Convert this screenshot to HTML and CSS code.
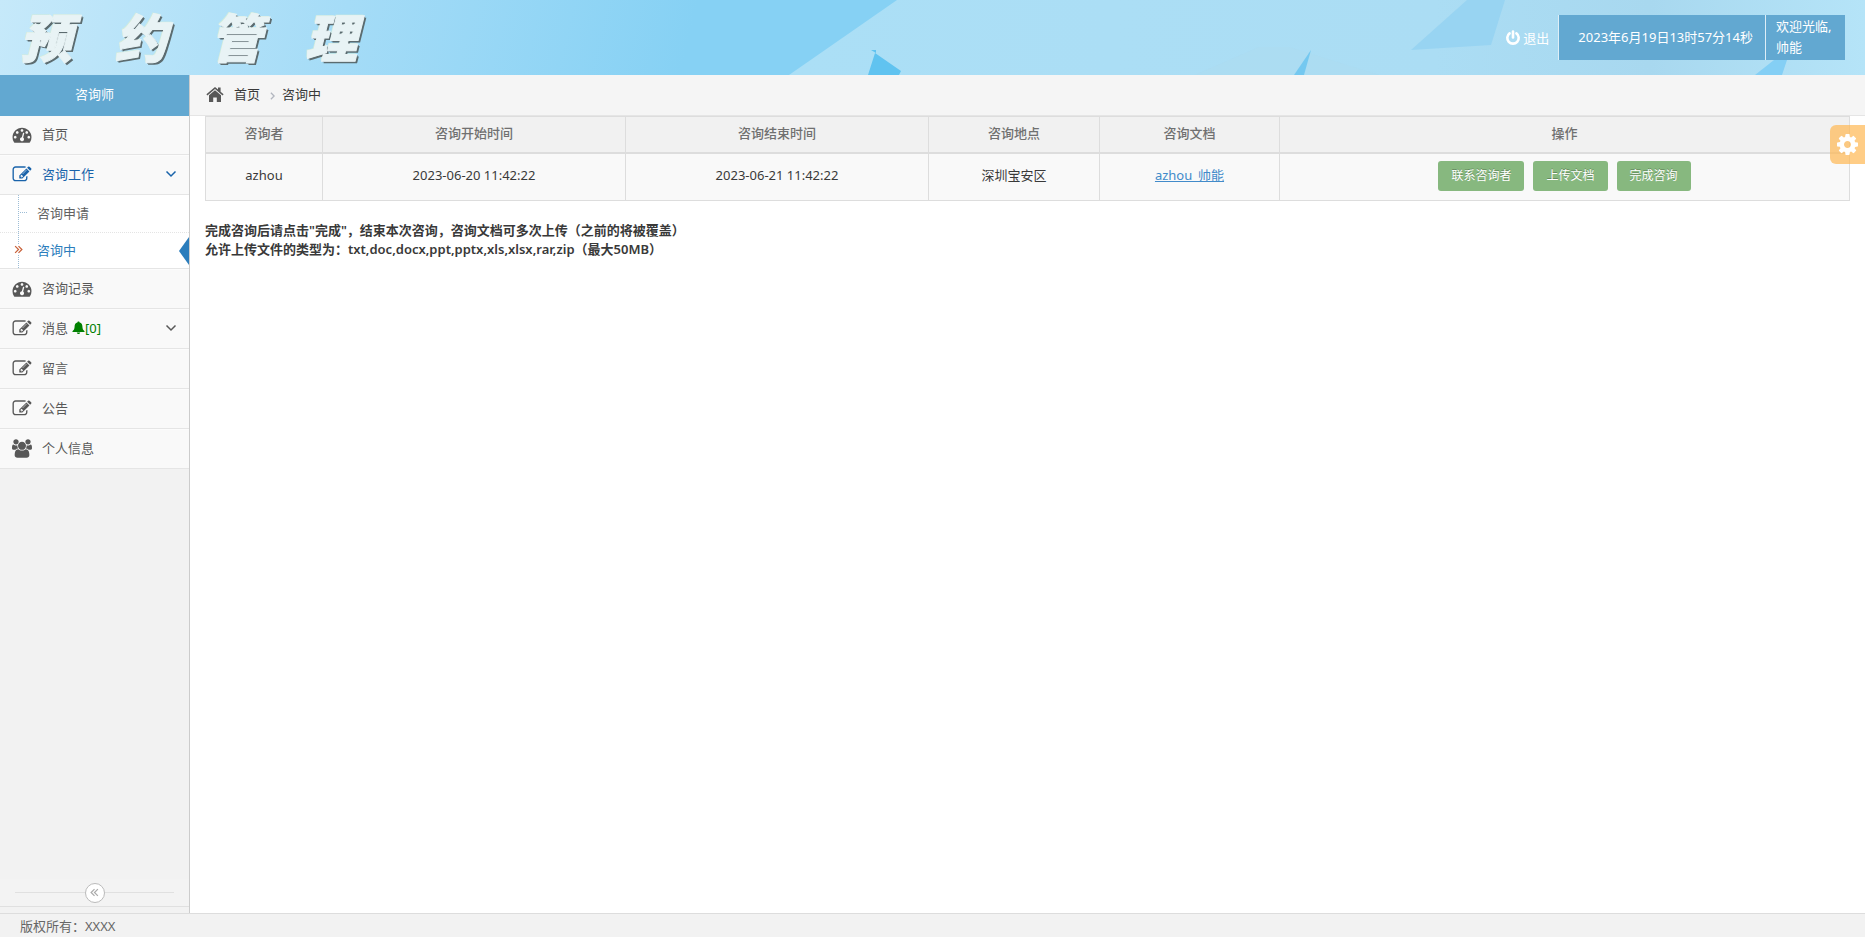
FILE: index.html
```
<!DOCTYPE html>
<html lang="zh-CN">
<head>
<meta charset="utf-8">
<title>预约管理</title>
<link rel="stylesheet" href="styles.css">
</head>
<body>
<svg class="defs" width="0" height="0" aria-hidden="true">
  <symbol id="i-dash" viewBox="0 0 1792 1792"><path fill-rule="evenodd" d="M384 1152q0-53-37.500-90.500t-90.500-37.500-90.500 37.500-37.500 90.500 37.500 90.500 90.500 37.500 90.500-37.500 37.500-90.500zM576 704q0-53-37.500-90.500t-90.500-37.500-90.500 37.500-37.500 90.500 37.500 90.500 90.500 37.500 90.500-37.500 37.500-90.500zM1004 1185l101-382q6-26-7.500-48.500t-38.500-29.500-48 6.500-30 39.500l-101 382q-60 5-107 43.500t-63 98.500q-20 77 20 146t117 89 146-20 89-117q16-60-6-117t-72-91zM1664 1152q0-53-37.500-90.500t-90.500-37.500-90.500 37.500-37.500 90.500 37.500 90.500 90.500 37.500 90.500-37.500 37.500-90.500zM1024 512q0-53-37.500-90.500t-90.500-37.500-90.500 37.500-37.500 90.500 37.500 90.500 90.500 37.500 90.500-37.500 37.500-90.500zM1472 704q0-53-37.500-90.500t-90.500-37.500-90.500 37.500-37.500 90.500 37.500 90.500 90.500 37.500 90.500-37.500 37.500-90.500zM1792 1152q0 261-141 483-19 29-54 29h-1402q-35 0-54-29-141-221-141-483 0-182 71-348t191-286 286-191 348-71 348 71 286 191 191 286 71 348z"/></symbol>
  <symbol id="i-edit" viewBox="0 0 1792 1792"><path fill-rule="evenodd" d="M888 1184l116-116-152-152-116 116v56h96v96h56zM1328 464q-16-16-33 1l-350 350q-17 17-1 33t33-1l350-350q17-17 1-33zM1408 1058v190q0 119-84.500 203.500t-203.500 84.500h-832q-119 0-203.500-84.500t-84.500-203.500v-832q0-119 84.500-203.500t203.500-84.500h832q63 0 117 25 15 7 18 23 3 17-9 29l-49 49q-14 14-32 8-23-6-45-6h-832q-66 0-113 47t-47 113v832q0 66 47 113t113 47h832q66 0 113-47t47-113v-126q0-13 9-22l64-64q15-15 35-7t20 29zM1312 320l288 288-672 672h-288v-288zM1756 452l-92 92-288-288 92-92q28-28 68-28t68 28l152 152q28 28 28 68t-28 68z"/></symbol>
  <symbol id="i-users" viewBox="0 0 1920 1792"><path d="M593 896q-162 5-265 128h-134q-82 0-138-40.500t-56-118.500q0-353 124-353 6 0 43.500 21t97.500 42.500 119 21.500q67 0 133-23-5 37-5 66 0 139 81 256zM1664 1533q0 120-73 189.500t-194 69.500h-874q-121 0-194-69.500t-73-189.500q0-53 3.500-103.500t14-109 26.500-108.500 43-97.500 62-81 85.500-53.500 111.500-20q10 0 43 21.500t73 48 107 48 135 21.500 135-21.500 107-48 73-48 43-21.500q61 0 111.500 20t85.500 53.500 62 81 43 97.500 26.500 108.500 14 109 3.500 103.500zM640 256q0 106-75 181t-181 75-181-75-75-181 75-181 181-75 181 75 75 181zM1344 640q0 159-112.500 271.500t-271.500 112.500-271.500-112.500-112.500-271.500 112.500-271.500 271.500-112.500 271.500 112.500 112.500 271.500zM1920 865q0 78-56 118.500t-138 40.500h-134q-103-123-265-128 81-117 81-256 0-29-5-66 66 23 133 23 59 0 119-21.500t97.500-42.500 43.500-21q124 0 124 353zM1792 256q0 106-75 181t-181 75-181-75-75-181 75-181 181-75 181 75 75 181z"/></symbol>
  <symbol id="i-home" viewBox="0 0 18 16"><path d="M0.400 8.200 9 1l3 2.500V1.500h2.600v4.200l3 2.500-1 1.200L9 3 1.400 9.400zM3 9.200l6-5 6 5V16h-4.200v-4.600H7.200V16H3z"/></symbol>
  <symbol id="i-down" viewBox="0 0 12 8"><path d="M1.500 1.500 6 6l4.500-4.500" fill="none" stroke="currentColor" stroke-width="1.500"/></symbol>
  <symbol id="i-right" viewBox="0 0 6 10"><path d="M1 1l4 4-4 4" fill="none" stroke="currentColor" stroke-width="1.600"/></symbol>
  <symbol id="i-double" viewBox="0 0 8 8"><path d="M1 1l3 3-3 3M4 1l3 3-3 3" fill="none" stroke="currentColor" stroke-width="1.100"/></symbol>
  <symbol id="i-bell" viewBox="0 0 14 14"><path d="M7 0.500c.8 0 1.200.5 1.200 1.200C10.500 2.300 11.200 4 11.200 6c0 2.600.9 4 2.300 5v.8H.5V11c1.400-1 2.300-2.400 2.300-5 0-2 .7-3.700 3-4.300C5.800 1 6.200.5 7 .5zM5.200 12.300h3.600c0 1-.8 1.600-1.800 1.600s-1.800-.6-1.800-1.600z"/></symbol>
  <symbol id="i-power" viewBox="0 0 16 16"><path d="M4.600 3.400A5.700 5.700 0 1 0 11.400 3.400" fill="none" stroke="currentColor" stroke-width="2.600" stroke-linecap="round"/><path d="M8 1.500v6" stroke="currentColor" stroke-width="2.600" stroke-linecap="round"/></symbol>
  <symbol id="i-cog" viewBox="0 0 1536 1536"><path fill-rule="evenodd" d="M1024 768q0-106-75-181t-181-75-181 75-75 181 75 181 181 75 181-75 75-181zM1536 659v222q0 12-8 23t-20 13l-185 28q-19 54-39 91 35 50 107 138 10 12 10 25t-9 23q-27 37-99 108t-94 71q-12 0-26-9l-138-108q-44 23-91 38-16 136-29 186-7 28-36 28h-222q-14 0-24.500-8.500t-11.500-21.500l-28-184q-49-16-90-37l-141 107q-10 9-25 9-14 0-25-11-126-114-165-168-7-10-7-23 0-12 8-23 15-21 51-66.500t54-70.500q-27-50-41-99l-183-27q-13-2-21-12.500t-8-23.500v-222q0-12 8-23t19-13l186-28q14-46 39-92-40-57-107-138-10-12-10-24 0-10 9-23 26-36 98.500-107.500t94.500-71.500q13 0 26 10l138 107q44-23 91-38 16-136 29-186 7-28 36-28h222q14 0 24.500 8.500t11.500 21.500l28 184q49 16 90 37l142-107q9-9 24-9 13 0 25 10 129 119 165 170 7 8 7 22 0 12-8 23-15 21-51 66.500t-54 70.500q26 50 41 98l183 28q13 2 21 12.500t8 23.500z"/></symbol>
</svg>

<header class="banner">
  <svg class="banner-art" viewBox="0 0 1865 75" preserveAspectRatio="none" aria-hidden="true">
    <defs>
      <linearGradient id="sky" x1="0" y1="0" x2="660" y2="160" gradientUnits="userSpaceOnUse"><stop offset="0" stop-color="#c6e9fa"/><stop offset="0.500" stop-color="#a5dcf7"/><stop offset="1" stop-color="#86d1f4"/></linearGradient>
      <linearGradient id="pale" x1="0" x2="1"><stop offset="0" stop-color="#abdff6"/><stop offset="0.600" stop-color="#abddf4"/><stop offset="0.800" stop-color="#a8d8ef"/><stop offset="1" stop-color="#b5e4f8"/></linearGradient>
    </defs>
    <path fill="url(#sky)" d="M0 0h1865v75H0z"/>
    <path fill="url(#pale)" d="M897 0h968v75H789z"/>
    <path fill="#60c3f0" d="M875 53l26 18-2 4h-31zM871 50h5v3z"/>
    <path fill="#addcef" d="M1195 75l64-28h30l90 28z" opacity=".5"/>
    <path fill="#98d4f2" d="M1467 0h38l-14 45-80 5z"/>
    <path fill="#74c8f0" d="M1311 50l-7 25h-10z"/>
    <path fill="#84cff5" d="M1774 60h13l-5 15h-27z"/>
  </svg>
  <h1 class="brand"><span>预</span><span>约</span><span>管</span><span>理</span></h1>
  <div class="userbar">
    <a class="logout" href="#"><svg class="ic-power"><use href="#i-power"/></svg>退出</a>
    <time class="clock">2023年6月19日13时57分14秒</time>
    <div class="welcome">欢迎光临,<br>帅能</div>
  </div>
</header>

<div class="body">
  <aside class="sidebar">
    <div class="role">咨询师</div>
    <nav>
      <ul class="menu">
        <li><a href="#"><svg class="ic"><use href="#i-dash"/></svg>首页</a></li>
        <li class="open"><a href="#"><svg class="ic"><use href="#i-edit"/></svg>咨询工作<svg class="ic-down"><use href="#i-down"/></svg></a>
          <ul class="submenu">
            <li><a href="#">咨询申请</a></li>
            <li class="active"><a href="#"><svg class="ic-double"><use href="#i-double"/></svg>咨询中</a></li>
          </ul>
        </li>
        <li><a href="#"><svg class="ic"><use href="#i-dash"/></svg>咨询记录</a></li>
        <li><a href="#"><svg class="ic"><use href="#i-edit"/></svg>消息<span class="badge"><svg class="ic-bell"><use href="#i-bell"/></svg>[0]</span><svg class="ic-down"><use href="#i-down"/></svg></a></li>
        <li><a href="#"><svg class="ic"><use href="#i-edit"/></svg>留言</a></li>
        <li><a href="#"><svg class="ic"><use href="#i-edit"/></svg>公告</a></li>
        <li><a href="#"><svg class="ic"><use href="#i-users"/></svg>个人信息</a></li>
      </ul>
    </nav>
    <div class="collapse"><button type="button" aria-label="收起菜单"><svg class="ic-collapse"><use href="#i-double"/></svg></button></div>
  </aside>

  <main class="main">
    <nav class="crumbs"><svg class="ic-home"><use href="#i-home"/></svg><a href="#">首页</a><svg class="ic-right"><use href="#i-right"/></svg><span>咨询中</span></nav>
    <div class="content">
      <table class="grid">
        <colgroup><col class="c1"><col class="c2"><col class="c2"><col class="c3"><col class="c4"><col></colgroup>
        <thead><tr><th>咨询者</th><th>咨询开始时间</th><th>咨询结束时间</th><th>咨询地点</th><th>咨询文档</th><th>操作</th></tr></thead>
        <tbody><tr>
          <td>azhou</td><td>2023-06-20 11:42:22</td><td>2023-06-21 11:42:22</td><td>深圳宝安区</td><td><a href="#">azhou_帅能</a></td>
          <td class="ops"><div class="actions"><button type="button">联系咨询者</button><button type="button">上传文档</button><button type="button">完成咨询</button></div></td>
        </tr></tbody>
      </table>
      <p class="note">完成咨询后请点击"完成"，结束本次咨询，咨询文档可多次上传（之前的将被覆盖）<br>允许上传文件的类型为：txt,doc,docx,ppt,pptx,xls,xlsx,rar,zip（最大50MB）</p>
    </div>
    <button class="settings" type="button" aria-label="设置"><svg class="ic-cog"><use href="#i-cog"/></svg></button>
  </main>
</div>
<footer class="footer">版权所有：XXXX</footer>
</body>
</html>
```
FILE: styles.css
```
* { box-sizing: border-box; }
body {
  margin: 0;
  min-height: 100vh;
  display: flex;
  flex-direction: column;
  font: 13px/20px "Noto Sans", "Noto Sans CJK SC", sans-serif;
  color: #393939;
  background: #fff;
}
a { color: inherit; text-decoration: none; }
ul { list-style: none; margin: 0; padding: 0; }
button { font: inherit; border: 0; cursor: pointer; }
svg { fill: currentColor; flex: none; }
.defs { position: absolute; }

.banner {
  position: relative;
  height: 75px;
  display: flex;
  align-items: center;
  justify-content: space-between;
  padding: 0 20px;
}
.banner-art { position: absolute; inset: 0; width: 100%; height: 100%; }
.brand {
  position: relative;
  display: flex;
  gap: 43px;
  margin: 0 0 4px;
  font: italic 900 52px/71px "Noto Sans CJK SC", sans-serif;
  color: #e8f3f5;
  -webkit-text-stroke: 1px #e8f3f5;
  text-shadow: 1px 1px 0 #5c6c70, 2px 2px 0 #5c6c70, -1px -1px 0 #d3ecdc;
}
.userbar { position: relative; display: flex; align-items: center; color: #fff; }
.logout { display: flex; align-items: center; gap: 2px; margin-right: 9px; }
.ic-power { width: 16px; height: 16px; }
.clock, .welcome { height: 45px; background: #62a8d1; border-left: 1px solid #ddeef7; }
.clock { padding: 0 12px 0 19px; line-height: 45px; }
.welcome { width: 80px; padding: 1px 10px; line-height: 21px; }

.body { flex: 1; display: flex; }
.sidebar {
  width: 190px;
  flex: none;
  background: #f2f2f2;
  border-right: 1px solid #ccc;
  display: flex;
  flex-direction: column;
}
.role { height: 41px; line-height: 39px; text-align: center; color: #fff; background: #62a8d1; }
.menu > li { border-top: 1px solid #fcfcfc; border-bottom: 1px solid #e5e5e5; background: #f9f9f9; }
.menu > li:first-child { border-top: 0; }
.menu > li > a { display: flex; align-items: center; height: 38px; padding: 0 12px 3px; color: #585858; }
.ic { width: 20px; height: 19px; margin: 2px 10px 0 0; }
.ic-down { width: 12px; height: 8px; margin-left: auto; }
.menu > .open > a { color: #1963aa; }
.badge { display: flex; align-items: center; margin-left: 4px; color: green; }
.ic-bell { width: 13px; height: 13px; }
.submenu { position: relative; background: #fff; border-top: 1px solid #e5e5e5; }
.submenu::before { content: ""; position: absolute; left: 18px; top: 0; bottom: 0; border-left: 1px dotted #9dbdd6; }
.submenu li { position: relative; }
.submenu li + li { border-top: 1px dotted #e4e4e4; }
.submenu li:first-child::before { content: ""; position: absolute; left: 20px; top: 17px; width: 7px; border-top: 1px dotted #9dbdd6; }
.submenu a { display: block; padding: 8px 0 9px 37px; color: #616161; }
.submenu .active a { color: #2b7dbc; padding: 7px 0 8px 37px; }
.submenu .active::after { content: ""; position: absolute; right: 0; top: 4px; border: solid transparent; border-width: 14px 10px 14px 0; border-right-color: #2b7dbc; }
.ic-double { position: absolute; left: 14px; top: 12px; width: 9px; height: 9px; background: #fff; color: #c86139; }
.collapse {
  margin-top: auto;
  margin-bottom: 6px;
  height: 28px;
  border-bottom: 1px solid #e0e0e0;
  background: linear-gradient(#e0e0e0, #e0e0e0) 50% 13px / 159px 1px no-repeat #f3f3f3;
  display: flex;
  justify-content: center;
  align-items: center;
}
.collapse button { width: 20px; height: 20px; padding: 0; border: 1px solid #bbb; border-radius: 50%; background: #fff; color: #aaa; display: grid; place-items: center; }
.ic-collapse { width: 9px; height: 9px; transform: rotate(180deg); }

.main { position: relative; flex: 1; min-width: 0; }
.crumbs { display: flex; align-items: center; height: 41px; padding: 0 16px 2px; background: #f5f5f5; border-bottom: 1px solid #e5e5e5; }
.ic-home { width: 18px; height: 16px; margin-right: 10px; color: #585858; }
.ic-right { width: 5px; height: 8px; margin: 3px 7px 0 10px; color: #b2b6bf; }
.content { padding: 0 15px; }
.grid { width: 100%; table-layout: fixed; border-collapse: collapse; background: #f9f9f9; text-align: center; }
.grid th, .grid td { border: 1px solid #ddd; padding: 6px 8px 9px; }
.grid th { height: 36px; color: #707070; background: #f1f1f1; border-bottom-width: 2px; font-weight: 500; }
.grid td { height: 47px; padding-bottom: 10px; }
.grid td.ops { padding: 7px 8px 8px; }
.grid td a { color: #428bca; text-decoration: underline; }
.c1 { width: 117px; }
.c2 { width: 303px; }
.c3 { width: 171px; }
.c4 { width: 180px; }
.actions { display: flex; justify-content: center; gap: 9px; }
.actions button { height: 30px; padding: 0 13px; border-radius: 3px; background: #87b87f; color: #fff; font-size: 12px; text-shadow: 0 -1px 0 rgba(0, 0, 0, .25); }
.note { margin: 20px 0 0; font-weight: 600; line-height: 19px; }
.settings { position: absolute; right: 0; top: 50px; width: 35px; height: 39px; padding: 0; border-radius: 6px 0 0 6px; background: rgba(255, 184, 82, .7); color: #fff; display: grid; place-items: center; }
.ic-cog { width: 21px; height: 21px; }
.footer { height: 24px; padding: 0 20px; line-height: 24px; border-top: 1px solid #ddd; background: #f2f2f2; color: #666; }
```
